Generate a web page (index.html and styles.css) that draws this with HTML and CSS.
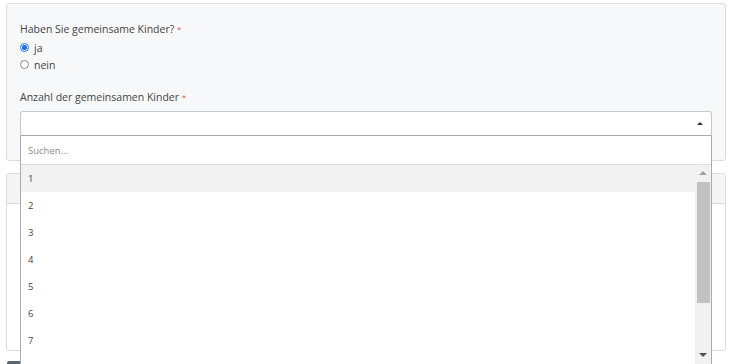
FILE: index.html
```html
<!DOCTYPE html>
<html lang="de">
<head>
<meta charset="utf-8">
<title>Formular</title>
<link rel="stylesheet" href="styles.css">
</head>
<body>
<div class="page">
  <section class="card card-form">
    <div class="field">
      <div class="label">Haben Sie gemeinsame Kinder? <span class="req">*</span></div>
      <div class="radios">
        <label class="radio"><span class="dot checked"></span>ja</label>
        <label class="radio"><span class="dot"></span>nein</label>
      </div>
    </div>
    <div class="field field-select">
      <div class="label">Anzahl der gemeinsamen Kinder <span class="req">*</span></div>
      <div class="select-wrap">
        <div class="select">
          <span class="caret"></span>
        </div>
        <div class="dropdown">
          <div class="search"><span class="placeholder">Suchen...</span></div>
          <div class="results">
            <ul class="options">
              <li class="opt active">1</li>
              <li class="opt">2</li>
              <li class="opt">3</li>
              <li class="opt">4</li>
              <li class="opt">5</li>
              <li class="opt">6</li>
              <li class="opt">7</li>
            </ul>
            <div class="scrollbar">
              <span class="arrow up"></span>
              <span class="thumb"></span>
              <span class="track"></span>
              <span class="arrow down"></span>
            </div>
          </div>
        </div>
      </div>
    </div>
  </section>
  <section class="card card-second">
    <div class="card-head"></div>
    <div class="card-body"></div>
  </section>
  <div class="actions"><span class="btn"></span></div>
</div>
</body>
</html>
```
FILE: styles.css
```css
* { box-sizing: border-box; }
html, body { margin: 0; padding: 0; background: #fff; }
body {
  font-family: "Open Sans", "Liberation Sans", sans-serif;
  font-size: 10.5px;
  color: #444;
  overflow: hidden;
  height: 364px;
}
.page {
  padding: 3px 6px 0 6px;
  display: flex;
  flex-direction: column;
  gap: 12px;
}
.card {
  border: 1px solid #dcdcdc;
  border-radius: 3px;
}
.card-form {
  background: #f7f8fa;
  height: 158px;
  padding: 18px 13px 0 13px;
}
.label {
  line-height: 14px;
  font-size: 10.5px;
  color: #444;
}
.req { color: #d9534f; font-size: 8px; vertical-align: top; }
.radios {
  margin-top: 3px;
  display: flex;
  flex-direction: column;
}
.radio {
  display: flex;
  align-items: center;
  gap: 5px;
  height: 17px;
  color: #444;
}
.dot {
  width: 9px;
  height: 9px;
  border-radius: 50%;
  border: 1px solid #8a8a8a;
  background: #fff;
}
.dot.checked {
  border-color: #1a73e8;
  background: radial-gradient(circle, #1a73e8 0 2.3px, #fff 2.8px);
}
.field-select { margin-top: 17px; }
.field-select .label { margin-bottom: 7px; }
.select-wrap { position: relative; }
.select {
  height: 25px;
  background: #fff;
  border: 1px solid #c8c8c8;
  border-bottom-color: #aaa;
  border-radius: 3px 3px 0 0;
  display: flex;
  align-items: center;
  justify-content: flex-end;
  padding-right: 8px;
}
.caret {
  width: 0; height: 0;
  border-left: 3px solid transparent;
  border-right: 3px solid transparent;
  border-bottom: 3px solid #333;
}
.dropdown {
  position: absolute;
  top: 100%;
  left: 0;
  right: 0;
  height: 232px;
  background: #fff;
  border: 1px solid #aaa;
  border-top: none;
  display: flex;
  flex-direction: column;
}
.search {
  height: 29px;
  border-bottom: 1px solid #dcdcdc;
  display: flex;
  align-items: center;
  padding-left: 7px;
}
.placeholder { color: #8a8a8a; font-size: 9.5px; }
.results {
  flex: 1;
  display: flex;
  overflow: hidden;
}
.options {
  flex: 1;
  list-style: none;
  margin: 0;
  padding: 0;
}
.opt {
  height: 27px;
  line-height: 27px;
  padding-left: 7px;
  font-size: 9.5px;
  color: #444;
}
.opt.active { background: #f2f2f2; }
.scrollbar {
  width: 16px;
  background: #f1f1f1;
  display: flex;
  flex-direction: column;
  align-items: center;
}
.arrow {
  width: 0; height: 0;
  border-left: 4px solid transparent;
  border-right: 4px solid transparent;
}
.arrow.up { border-bottom: 4px solid #a3a3a3; margin: 6px 0 7px; }
.arrow.down { border-top: 4px solid #505050; margin: 5px 0 10px; }
.thumb { width: 13px; height: 121px; background: #c1c1c1; }
.track { flex: 1; }
.card-second {
  height: 178px;
  background: #fff;
  display: flex;
  flex-direction: column;
}
.card-head {
  height: 30px;
  background: #f5f5f5;
  border-bottom: 1px solid #dcdcdc;
}
.card-body { flex: 1; }
.actions { margin-top: -2px; padding-left: 1px; }
.btn { display: block; width: 14px; height: 6px; background: #5c6670; border-radius: 2px; }
```
